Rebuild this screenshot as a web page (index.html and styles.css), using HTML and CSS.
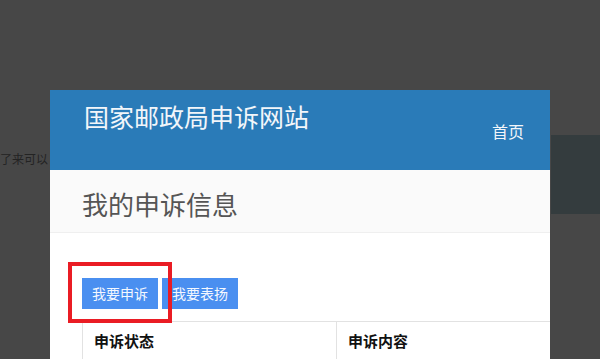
FILE: index.html
```html
<!DOCTYPE html>
<html lang="zh-CN">
<head>
<meta charset="utf-8">
<title>国家邮政局申诉网站</title>
<link rel="stylesheet" href="styles.css">
</head>
<body>
<div class="page">
  <div class="strip">
    <span class="bg-text">了来可以</span>
    <div class="band"></div>
  </div>
</div>

<div class="modal">
  <header class="site-header">
    <div class="site-title">国家邮政局申诉网站</div>
    <nav class="site-nav">首页</nav>
  </header>
  <section class="page-head">
    <h1 class="page-title">我的申诉信息</h1>
  </section>
  <section class="content">
    <div class="actions">
      <button class="btn">我要申诉</button>
      <button class="btn">我要表扬</button>
    </div>
    <table class="list">
      <thead>
        <tr><th class="col-status">申诉状态</th><th>申诉内容</th></tr>
      </thead>
    </table>
  </section>
  <div class="highlight"></div>
</div>
</body>
</html>
```

FILE: styles.css
```css
html, body {
  margin: 0;
  padding: 0;
  width: 600px;
  height: 359px;
  overflow: hidden;
  background: #474747;
  font-family: "Noto Sans CJK SC", "Noto Sans", sans-serif;
}

.page {
  padding-top: 135px;
}

.strip {
  height: 79px;
  display: flex;
  justify-content: space-between;
  align-items: flex-start;
}

.bg-text {
  margin-top: 15px;
  font-size: 12px;
  line-height: 18px;
  color: #232323;
  font-family: "Noto Sans CJK SC", serif;
}

.band {
  width: 49px;
  height: 79px;
  background: #343c3e;
}

.modal {
  position: absolute;
  left: 50px;
  top: 90px;
  width: 500px;
  height: 269px;
  background: #fff;
  overflow: hidden;
}

.site-header {
  height: 80px;
  background: #2a7bb8;
  display: flex;
  justify-content: space-between;
  align-items: flex-start;
  padding: 0 26px 0 34px;
  color: #f2f6fa;
}

.site-title {
  margin-top: 10px;
  font-size: 25px;
  line-height: 32px;
}

.site-nav {
  margin-top: 30px;
  font-size: 16px;
  line-height: 22px;
}

.page-head {
  height: 62px;
  background: #fafafa;
  border-bottom: 1px solid #efefef;
  padding-left: 32px;
}

.page-title {
  margin: 0;
  padding-top: 16px;
  font-size: 26px;
  line-height: 36px;
  font-weight: normal;
  color: #555;
}

.content {
  padding: 45px 0 0 32px;
}

.actions {
  display: flex;
  gap: 4px;
}

.btn {
  border: none;
  margin: 0;
  padding: 0 10px;
  height: 31px;
  background: #4a8ff0;
  color: #f4f8ff;
  font-family: inherit;
  font-size: 14px;
  line-height: 31px;
}

.list {
  margin-top: 12px;
  width: 468px;
  border-collapse: collapse;
  border-top: 1px solid #e2e2e2;
  border-left: 1px solid #e2e2e2;
}

.list th {
  text-align: left;
  font-size: 15px;
  font-weight: bold;
  color: #111;
  padding: 8px 11px;
  line-height: 22px;
}

.col-status {
  width: 231px;
  border-right: 1px solid #e2e2e2;
}

.highlight {
  position: absolute;
  left: 18px;
  top: 172px;
  width: 96px;
  height: 53px;
  border: 4px solid #ea1c24;
}
```
